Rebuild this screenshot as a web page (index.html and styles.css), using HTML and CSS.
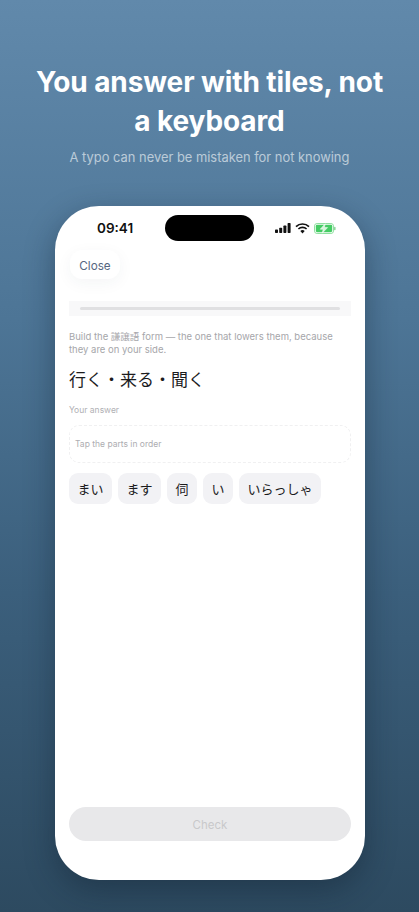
FILE: index.html
```html
<!DOCTYPE html>
<html lang="en">
<head>
    <meta charset="UTF-8">
    <meta name="viewport" content="width=device-width, initial-scale=1.0">
    <title>You answer with tiles</title>
    <link rel="stylesheet" href="styles.css">
</head>
<body>

    <div class="screen">
        <h1 class="headline">You answer with tiles, not a keyboard</h1>
        <p class="subline">A typo can never be mistaken for not knowing</p>

        <div class="phone">
            <!-- Status bar -->
            <div class="status-bar">
                <span class="time">09:41</span>
                <div class="island"></div>
                <div class="status-icons">
                    <svg width="16" height="10" viewBox="0 0 16 10">
                        <rect x="0" y="6.5" width="3" height="3.5" rx="0.7" fill="#111"/>
                        <rect x="4.2" y="4.7" width="3" height="5.3" rx="0.7" fill="#111"/>
                        <rect x="8.4" y="2.5" width="3" height="7.5" rx="0.7" fill="#111"/>
                        <rect x="12.6" y="0" width="3" height="10" rx="0.7" fill="#111"/>
                    </svg>
                    <svg width="15" height="11" viewBox="0 0 15 11">
                        <path d="M1 3.6 A9.4 9.4 0 0 1 14 3.6" fill="none" stroke="#111" stroke-width="1.7"/>
                        <path d="M3.4 6 A6 6 0 0 1 11.6 6" fill="none" stroke="#111" stroke-width="1.7"/>
                        <path d="M5.3 8 L7.5 10.6 L9.7 8 A3.2 3.2 0 0 0 5.3 8 Z" fill="#111"/>
                    </svg>
                    <svg width="22" height="11" viewBox="0 0 22 11">
                        <rect x="0.5" y="0.5" width="19" height="10" rx="2.6" fill="#fff" stroke="#8fe09f"/>
                        <rect x="1.8" y="1.8" width="16.4" height="7.4" rx="1.4" fill="#45cc64"/>
                        <rect x="20" y="3.7" width="1.6" height="3.6" rx="0.8" fill="#8fd49c"/>
                        <path d="M11.2 0.8 L6.2 6.2 H9.2 L8.2 10.2 L13.6 4.6 H10.4 Z" fill="#d6f4dc" stroke="#fff" stroke-width="0.5"/>
                    </svg>
                </div>
            </div>

            <div class="close-row">
                <button class="close-btn">Close</button>
            </div>

            <!-- Прогресс -->
            <div class="progress">
                <div class="progress-bar"></div>
            </div>

            <p class="task">Build the 謙譲語 form — the one that lowers them, because they are on your side.</p>
            <div class="prompt">行く・来る・聞く</div>

            <div class="answer-label">Your answer</div>
            <div class="answer-box">Tap the parts in order</div>

            <!-- Плитки -->
            <div class="tiles">
                <div class="tile">まい</div>
                <div class="tile">ます</div>
                <div class="tile">伺</div>
                <div class="tile">い</div>
                <div class="tile">いらっしゃ</div>
            </div>

            <button class="check-btn">Check</button>
        </div>
    </div>

</body>
</html>
```

FILE: styles.css
```css
body {
    margin: 0;
    font-family: Inter, "Noto Sans CJK JP", sans-serif;
}

.screen {
    height: 912px;
    box-sizing: border-box;
    padding-top: 63px;
    overflow: hidden;
    background: linear-gradient(180deg, #6189ab 0%, #4d7596 35%, #3b5f7c 65%, #2d4a60 100%);
    text-align: center;
}

.headline {
    margin: 0 auto;
    width: 355px;
    color: #fff;
    font-size: 28px;
    font-weight: 700;
    line-height: 39px;
    letter-spacing: -0.1px;
}

.subline {
    margin: 8px 0 0;
    color: rgba(255, 255, 255, 0.6);
    font-size: 12.9px;
    line-height: 18px;
}

.phone {
    display: flex;
    flex-direction: column;
    width: 310px;
    height: 674px;
    box-sizing: border-box;
    margin: 39px 0 0 55px;
    padding: 0 14px 39px;
    background: #fff;
    border-radius: 44px;
    box-shadow: 0 10px 30px rgba(15, 30, 45, 0.4);
    text-align: left;
}

.status-bar {
    display: flex;
    align-items: center;
    height: 26px;
    margin: 9px 0 0;
}

.time {
    width: 96px;
    padding-left: 28px;
    box-sizing: border-box;
    color: #111;
    font-size: 13.5px;
    font-weight: 600;
}

.island {
    width: 89px;
    height: 26px;
    background: #000;
    border-radius: 13px;
}

.status-icons {
    display: flex;
    align-items: center;
    gap: 4px;
    margin-left: 21px;
}

.close-row {
    margin-top: 9px;
}

.close-btn {
    display: block;
    width: 50px;
    height: 29px;
    margin-left: 1px;
    padding: 2px 0 0;
    border: 0;
    border-radius: 12px;
    background: #fff;
    box-shadow: 0 4px 16px rgba(40, 50, 70, 0.05);
    color: #56677f;
    font-family: inherit;
    font-size: 11.7px;
}

.progress {
    display: flex;
    align-items: center;
    height: 15px;
    margin-top: 22px;
    padding: 0 11px;
    background: #f8f8f9;
}

.progress-bar {
    flex: 1;
    height: 3px;
    background: #e0e0e2;
    border-radius: 2px;
}

.task {
    margin: 14px 0 0;
    color: #a6a6aa;
    font-size: 9.5px;
    line-height: 13px;
}

.prompt {
    margin-top: 11px;
    color: #1c1c1e;
    font-size: 17px;
    line-height: 26px;
}

.answer-label {
    margin-top: 11px;
    color: #b0b0b4;
    font-size: 8.5px;
    line-height: 12px;
}

.answer-box {
    display: flex;
    align-items: center;
    height: 38px;
    box-sizing: border-box;
    margin-top: 9px;
    padding-left: 5px;
    border: 1px dashed #f0f0f1;
    border-radius: 10px;
    color: #adadb1;
    font-size: 8.5px;
}

.tiles {
    display: flex;
    gap: 6px;
    margin-top: 10px;
}

.tile {
    display: flex;
    align-items: center;
    height: 31px;
    padding: 0 8.5px;
    background: #f2f2f5;
    border-radius: 9px;
    color: #1c1c1e;
    font-size: 13px;
}

.check-btn {
    height: 34px;
    margin-top: auto;
    padding: 2px 0 0;
    border: 0;
    border-radius: 17px;
    background: #e8e8ea;
    color: #c8c8ca;
    font-family: inherit;
    font-size: 11.5px;
}
```
